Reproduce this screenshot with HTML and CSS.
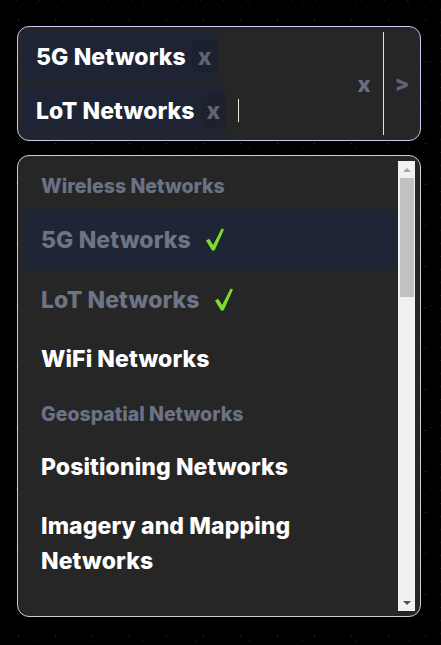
FILE: index.html
```html
<!DOCTYPE html>
<html lang="en">
<head>
    <meta charset="UTF-8">
    <meta name="viewport" content="width=device-width, initial-scale=1.0">
    <title>Network Select</title>
    <link rel="stylesheet" href="styles.css">
</head>
<body>
    <div class="select">
        <div class="control">
            <div class="values">
                <div class="tag"><span class="tag-label">5G Networks</span><span class="tag-remove">x</span></div>
                <div class="tag"><span class="tag-label">LoT Networks</span><span class="tag-remove">x</span></div>
                <span class="cursor"></span>
            </div>
            <div class="indicators">
                <span class="clear">x</span>
                <span class="sep"></span>
                <span class="chevron">&gt;</span>
            </div>
        </div>

        <div class="menu">
            <div class="menu-list">
                <div class="group">
                    <div class="group-head">Wireless Networks</div>
                    <div class="option selected focused">5G Networks <svg class="check" viewBox="0 0 18 23"><polygon points="0,12.5 3.2,10.8 7.2,17 15.6,0.4 18,1.6 8.6,22.4 6,22.4"/></svg></div>
                    <div class="option selected">LoT Networks <svg class="check" viewBox="0 0 18 23"><polygon points="0,12.5 3.2,10.8 7.2,17 15.6,0.4 18,1.6 8.6,22.4 6,22.4"/></svg></div>
                    <div class="option">WiFi Networks</div>
                </div>
                <div class="group">
                    <div class="group-head">Geospatial Networks</div>
                    <div class="option">Positioning Networks</div>
                    <div class="option">Imagery and Mapping Networks</div>
                </div>
            </div>
            <div class="scrollbar">
                <span class="arrow up"></span>
                <span class="thumb"></span>
                <span class="track"></span>
                <span class="arrow down"></span>
            </div>
        </div>
    </div>
</body>
</html>
```

FILE: styles.css
```css
body {
    margin: 0;
    min-height: 645px;
    font-family: Inter, "Noto Sans", sans-serif;
    font-weight: 800;
    background-color: #000;
    background-image:
        radial-gradient(circle, rgba(255,255,255,0.16) 0.6px, transparent 1.1px),
        radial-gradient(circle, rgba(255,255,255,0.10) 0.6px, transparent 1.1px),
        radial-gradient(circle, rgba(255,255,255,0.13) 0.5px, transparent 1px),
        radial-gradient(circle, rgba(255,255,255,0.08) 0.5px, transparent 1px);
    background-size: 37px 41px, 53px 29px, 23px 61px, 17px 13px;
    background-position: 0 0, 11px 17px, 5px 31px, 7px 3px;
}
.select { width: 404px; margin-left: 17px; padding-top: 26px; }

.control {
    box-sizing: border-box;
    height: 115px;
    display: flex;
    background: #262626;
    border: 1.5px solid #c3cbf2;
    border-radius: 12px;
}
.values {
    flex: 1;
    display: flex;
    flex-wrap: wrap;
    align-items: center;
    align-content: center;
    row-gap: 5px;
    padding: 0 4px;
}
.tag {
    display: flex;
    align-items: center;
    height: 49px;
    padding-left: 14px;
    background: #1e2433;
    color: #fff;
    font-size: 23px;
    letter-spacing: 0.1px;
}
.tag-remove {
    display: flex;
    align-items: center;
    height: 33px;
    margin-left: 6px;
    padding: 0 6px;
    border-radius: 8px;
    background: #1c212d;
    color: #5f6474;
}
.cursor { width: 1px; height: 23px; margin-left: 12px; background: #e8e8e8; }

.indicators { display: flex; align-items: center; }
.clear { padding: 0 12px; color: #6b7080; font-size: 22px; }
.sep { align-self: stretch; width: 1.5px; margin: 5px 0; background: #e2e2e2; }
.chevron { width: 36px; text-align: center; color: #5d6375; font-size: 21px; font-weight: 900; }

.menu {
    box-sizing: border-box;
    height: 462px;
    margin-top: 14px;
    padding: 5px;
    display: flex;
    background: #262626;
    border: 1px solid #cfcfcf;
    border-radius: 12px;
}
.menu-list { flex: 1; overflow: hidden; }
.group-head {
    height: 49px;
    display: flex;
    align-items: center;
    padding-left: 18px;
    color: #6b7285;
    font-size: 19.5px;
}
.option {
    padding: 12px 18px;
    line-height: 35px;
    color: #fff;
    font-size: 23px;
    letter-spacing: 0.1px;
}
.option.selected { line-height: 36px; color: #6d7486; }
.option.focused { background: #1e2534; }
.check { width: 18px; height: 23px; margin-left: 10px; vertical-align: -3px; fill: #7fdc2c; }

.scrollbar {
    width: 17px;
    display: flex;
    flex-direction: column;
    align-items: center;
    background: #f1f1f1;
}
.arrow { width: 17px; height: 17px; display: flex; align-items: center; justify-content: center; }
.arrow::before { content: ""; border-left: 4px solid transparent; border-right: 4px solid transparent; }
.arrow.up::before { border-bottom: 4px solid #a3a3a3; }
.arrow.down::before { border-top: 4px solid #505050; }
.thumb { width: 14px; height: 119px; background: #c1c1c1; }
.track { flex: 1; }
```
